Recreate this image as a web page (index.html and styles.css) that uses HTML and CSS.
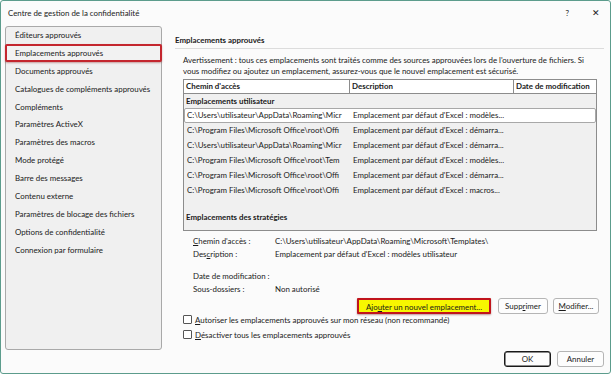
FILE: index.html
```html
<!DOCTYPE html>
<html lang="fr">
<head>
<meta charset="utf-8">
<link rel="stylesheet" href="styles.css">
</head>
<body>
<div class="window">
  <div class="titlebar">
    <span class="title">Centre de gestion de la confidentialité</span>
    <span class="tb-btns"><span class="help">?</span><span class="close">✕</span></span>
  </div>
  <div class="main">
    <ul class="sidebar">
      <li>Éditeurs approuvés</li>
      <li class="selected">Emplacements approuvés</li>
      <li>Documents approuvés</li>
      <li>Catalogues de compléments approuvés</li>
      <li>Compléments</li>
      <li>Paramètres ActiveX</li>
      <li>Paramètres des macros</li>
      <li>Mode protégé</li>
      <li>Barre des messages</li>
      <li>Contenu externe</li>
      <li>Paramètres de blocage des fichiers</li>
      <li>Options de confidentialité</li>
      <li>Connexion par formulaire</li>
    </ul>
    <div class="content">
      <div class="heading">Emplacements approuvés</div>
      <div class="body">
        <p class="warn">Avertissement : tous ces emplacements sont traités comme des sources approuvées lors de l'ouverture de fichiers. Si vous modifiez ou ajoutez un emplacement, assurez-vous que le nouvel emplacement est sécurisé.</p>
        <div class="table">
          <div class="thead">
            <div class="c1">Chemin d'accès</div>
            <div class="c2">Description</div>
            <div class="c3">Date de modification</div>
          </div>
          <div class="group">Emplacements utilisateur</div>
          <div class="row sel"><div class="c1">C:\Users\utilisateur\AppData\Roaming\Micr</div><div class="c2">Emplacement par défaut d'Excel : modèles...</div></div>
          <div class="row"><div class="c1">C:\Program Files\Microsoft Office\root\Offi</div><div class="c2">Emplacement par défaut d'Excel : démarra...</div></div>
          <div class="row"><div class="c1">C:\Users\utilisateur\AppData\Roaming\Micr</div><div class="c2">Emplacement par défaut d'Excel : démarra...</div></div>
          <div class="row"><div class="c1">C:\Program Files\Microsoft Office\root\Tem</div><div class="c2">Emplacement par défaut d'Excel : modèles...</div></div>
          <div class="row"><div class="c1">C:\Program Files\Microsoft Office\root\Offi</div><div class="c2">Emplacement par défaut d'Excel : démarra...</div></div>
          <div class="row"><div class="c1">C:\Program Files\Microsoft Office\root\Offi</div><div class="c2">Emplacement par défaut d'Excel : macros...</div></div>
          <div class="group strat">Emplacements des stratégies</div>
        </div>
        <div class="details">
          <div class="dl"><u>C</u>hemin d'accès :</div><div class="dv">C:\Users\utilisateur\AppData\Roaming\Microsoft\Templates\</div>
          <div class="dl">Des<u>c</u>ription :</div><div class="dv">Emplacement par défaut d'Excel : modèles utilisateur</div>
          <div class="dl gap">Date de modification :</div><div class="dv gap"></div>
          <div class="dl">Sous-dossiers :</div><div class="dv">Non autorisé</div>
        </div>
        <div class="actions">
          <button class="btn add">Ajo<u>u</u>ter un nouvel emplacement...</button>
          <button class="btn del">Supp<u>r</u>imer</button>
          <button class="btn mod"><u>M</u>odifier...</button>
        </div>
        <label class="check"><span class="box"></span><span><u>A</u>utoriser les emplacements approuvés sur mon réseau (non recommandé)</span></label>
        <label class="check"><span class="box"></span><span><u>D</u>ésactiver tous les emplacements approuvés</span></label>
      </div>
      <div class="footer">
        <button class="btn ok">OK</button>
        <button class="btn cancel">Annuler</button>
      </div>
    </div>
  </div>
</div>
</body>
</html>
```
FILE: styles.css
```css
* { box-sizing: border-box; }
html, body { margin: 0; padding: 0; }
body {
  font-family: "Lato", "Open Sans", sans-serif;
  font-size: 7.9px;
  color: #1a1a1a;
  background: #fff;
}
.window {
  width: 611px;
  height: 374px;
  border: 1px solid #5c9c8c;
  border-radius: 3px;
  background: #fbfbfb;
  display: flex;
  flex-direction: column;
  overflow: hidden;
}
.titlebar {
  flex: none;
  height: 25px;
  display: flex;
  align-items: center;
  justify-content: space-between;
  padding: 0 10px 2px 7px;
}
.tb-btns { display: flex; gap: 23px; align-items: center; }
.close { font-size: 9px; }
.main {
  flex: 1;
  min-height: 0;
  display: flex;
  padding-left: 4px;
}
.sidebar {
  flex: none;
  list-style: none;
  margin: 0;
  padding: 0;
  width: 157px;
  height: 324px;
  background: #f0f0f0;
  border: 1px solid #a9a9a9;
  border-radius: 3px;
}
.sidebar li {
  height: 17.9px;
  line-height: 17.9px;
  padding-left: 9px;
  white-space: nowrap;
}
.sidebar li.selected {
  border: 2px solid #c4262e;
  border-radius: 2px;
  margin: -1px -1px 1px -1px;
  padding-left: 8px;
  line-height: 14px;
  box-shadow: 0 1px 2px rgba(120,0,0,0.35);
  background: #f2f2f2;
}
.content {
  flex: 1;
  min-width: 0;
  display: flex;
  flex-direction: column;
  padding-left: 13px;
  padding-right: 6px;
}
.heading {
  flex: none;
  font-weight: bold;
  height: 23px;
  padding-top: 9px;
  border-bottom: 1px solid #dcdcdc;
}
.body {
  padding-left: 8px;
  flex: 1;
}
.warn {
  margin: 6px 0 0 0;
  line-height: 11px;
  padding-right: 6px;
}
.table {
  margin-top: 2px;
  width: 414px;
  height: 152px;
  background: #f0f0f0;
  border: 1px solid #8c8c8c;
  overflow: hidden;
}
.thead {
  display: flex;
  height: 14px;
  background: #fff;
  border-bottom: 1px solid #8c8c8c;
  font-weight: bold;
  white-space: nowrap;
}
.thead > div {
  border-right: 1px solid #8c8c8c;
  padding-left: 2px;
  line-height: 13px;
}
.c1 { width: 166px; flex: none; overflow: hidden; white-space: nowrap; }
.c2 { width: 164px; flex: none; overflow: hidden; white-space: nowrap; }
.c3 { width: 100px; flex: none; }
.group {
  font-weight: bold;
  height: 14px;
  line-height: 14px;
  padding-left: 2px;
}
.group.strat { margin-top: 12px; }
.row {
  display: flex;
  height: 15px;
  line-height: 13px;
  border: 1px solid transparent;
}
.row > div { padding-left: 2px; }
.row.sel {
  background: #fff;
  border: 1px solid #a8a8a8;
  border-radius: 2px;
}
.details {
  display: grid;
  grid-template-columns: 82px 1fr;
  margin-top: 4px;
  padding-left: 10px;
  line-height: 13px;
  white-space: nowrap;
}
.dl.gap, .dv.gap { margin-top: 9px; }
.actions {
  display: flex;
  justify-content: flex-end;
  gap: 5px;
  margin-top: 2px;
  margin-right: 5px;
  margin-bottom: -2px;
}
.btn {
  font-family: inherit;
  font-size: 7.9px;
  color: #1a1a1a;
  background: #fdfdfd;
  border: 1px solid #b5b5b5;
  border-radius: 3px;
  height: 16px;
  padding: 0;
  line-height: 14px;
}
.btn.add {
  width: 134px;
  background: #f7f700;
  border: 2px solid #c0141c;
  border-radius: 1px;
  box-shadow: 0 1px 2px rgba(100,0,0,0.4);
  margin-right: 2px;
}
.btn.del { width: 50px; }
.btn.mod { width: 46px; }
.check {
  display: flex;
  align-items: center;
  gap: 3px;
  height: 15px;
  white-space: nowrap;
}
.box {
  width: 9px;
  height: 9px;
  border: 1px solid #555;
  border-radius: 1px;
  background: #fff;
}
.footer {
  flex: none;
  display: flex;
  justify-content: flex-end;
  gap: 6px;
  padding-bottom: 6px;
}
.btn.ok { width: 47px; border: 1px solid #1a1a1a; border-radius: 3px; box-shadow: inset 0 0 0 0.5px #1a1a1a; }
.btn.cancel { width: 47px; }
```
